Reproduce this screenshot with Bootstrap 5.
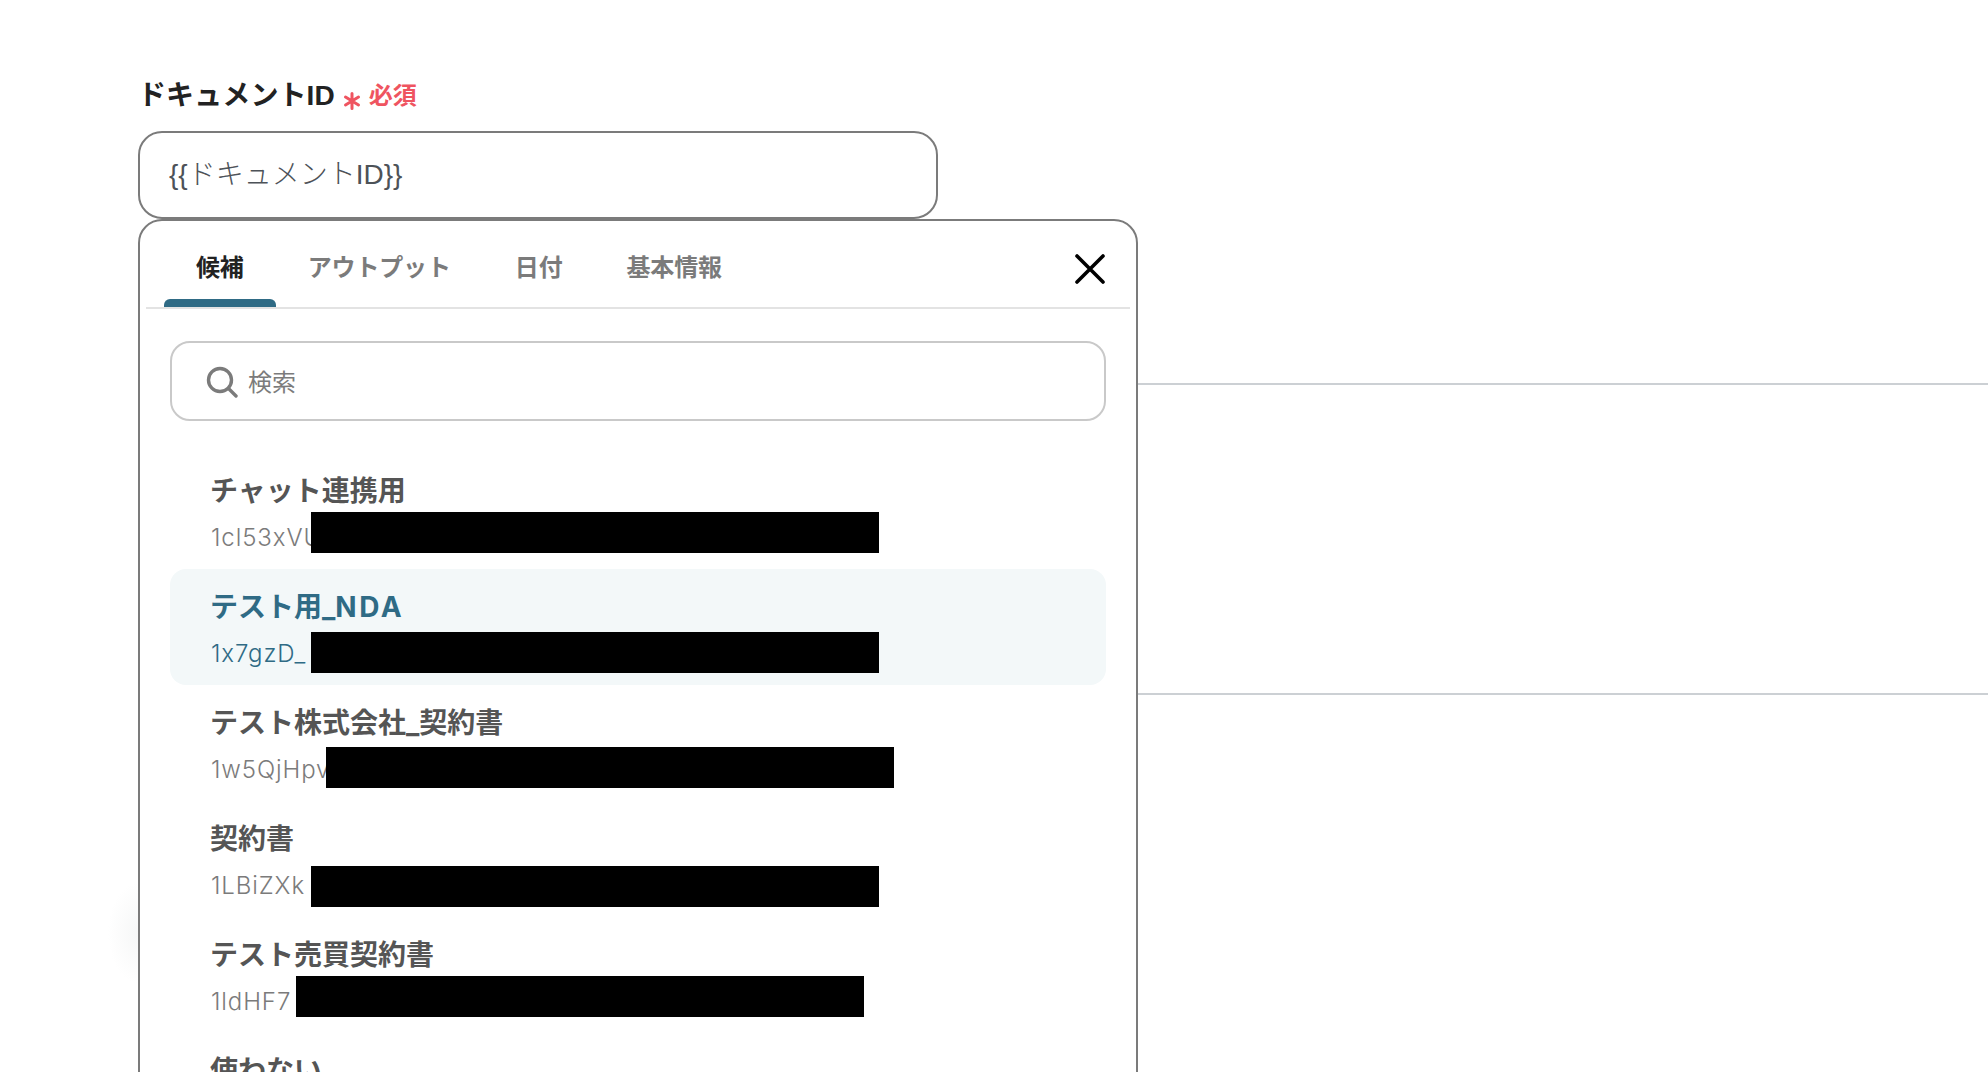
<!DOCTYPE html>
<html lang="ja">
<head>
    <meta charset="UTF-8">
    <title>ドキュメントID</title>
    <link rel="stylesheet" href="https://cdn.jsdelivr.net/npm/bootstrap@5.3.2/dist/css/bootstrap.min.css">
    <script src="https://cdn.jsdelivr.net/npm/bootstrap@5.3.2/dist/js/bootstrap.bundle.min.js"></script>
    <style>
        html, body { height: 100%; overflow: hidden; }
        body { font-family: "Liberation Sans", "Noto Sans CJK JP", sans-serif; background: #fff; color: #222; }
        .page-area { padding: 76px 0 0 138px; }
        .field-label { font-size: 28px; font-weight: 700; height: 38px; margin-bottom: 17px; gap: 8px; }
        .field-label .label-main { margin-top: 2px; letter-spacing: 0.1px; }
        .req-star { margin-top: 12px; }
        .req-text { color: #ef5460; font-size: 24px; margin-top: 2px; }
        .id-input { width: 800px; height: 88px; border: 2px solid #7b7b7b; border-radius: 24px; padding: 0 29px; font-size: 28px; font-weight: 300; color: #4d5258; }
        .field-body { position: relative; padding-top: 164px; }
        .bg-rule { height: 2px; background: #ccd0d4; opacity: 1; border: 0; margin: 0; }
        .bg-rule.second { margin-top: 308px; }
        .side-glow { position: absolute; left: -30px; top: 664px; width: 60px; height: 100px; background: radial-gradient(closest-side, #f6f7f7, #fff); }
        .var-panel { position: absolute; left: 0; top: 0; width: 1000px; height: 1000px; background: #fff; border: 2px solid #7b7b7b; border-radius: 24px; padding: 0 6px; }
        .tab-row { height: 88px; border-bottom: 2px solid #e3e3e3; padding-left: 18px; }
        .tab-btn { height: 86px; padding: 7px 32px 0; text-align: center; font-size: 24px; font-weight: 700; letter-spacing: -0.15px; color: #7b7b7b; background: none; border: 0; position: relative; }
        .tab-btn.on { color: #222; }
        .tab-btn.on::after { content: ""; position: absolute; left: 0; right: 0; bottom: 0; height: 8px; background: #2f6b85; border-radius: 6px 6px 0 0; }
        .close-x { position: absolute; left: 935px; top: 33px; width: 30px; height: 30px; padding: 0; background: none; border: 0; }
        .list-wrap { padding: 32px 24px 0; }
        .search-box { height: 80px; border: 2px solid #c9c9c9; border-radius: 20px; padding: 2px 0 0 34px; gap: 10px; color: #7b7b7b; font-size: 24px; }
        .search-box span { margin-top: 2px; }
        .doc-list { margin-top: 32px; }
        .doc-item { height: 116px; border-radius: 16px; padding: 18px 40px 0; position: relative; color: #555; }
        .doc-item.sel { background: #f3f8f9; color: #2f6b85; }
        .doc-title { font-family: Inter, "Noto Sans CJK JP", sans-serif; font-size: 28px; font-weight: 700; line-height: 40px; }
        .latin-wide { letter-spacing: 2.5px; }
        .doc-id { font-family: Inter, "Liberation Sans", sans-serif; font-feature-settings: "calt" 0; font-size: 24px; font-weight: 300; letter-spacing: 0.9px; line-height: 36px; margin-top: 9px; padding-left: 1px; color: #7b7b7b; }
        .sel .doc-id { color: #2f6b85; }
        .redact { position: absolute; height: 41px; width: 568px; background: #000; }
    </style>
</head>

<body>
    <div class="page-area">
        <div class="field-label d-flex align-items-center">
            <span class="label-main">ドキュメントID</span>
            <svg class="req-star" width="18" height="18" viewBox="0 0 18 18" aria-hidden="true"><path d="M9 1.5 V16.5 M2.5 5 L15.5 13 M15.5 5 L2.5 13" stroke="#ef5460" stroke-width="3" stroke-linecap="round" fill="none"/></svg>
            <span class="req-text">必須</span>
        </div>
        <div class="id-input d-flex align-items-center">{{ドキュメントID}}</div>
        <div class="field-body">
            <hr class="bg-rule">
            <hr class="bg-rule second">
            <div class="side-glow"></div>

            <!-- Popup over the form -->
            <div class="var-panel">
                <div class="tab-row d-flex">
                    <button class="tab-btn on" type="button">候補</button>
                    <button class="tab-btn" type="button">アウトプット</button>
                    <button class="tab-btn" type="button">日付</button>
                    <button class="tab-btn" type="button">基本情報</button>
                </div>
                <button class="close-x" type="button" aria-label="閉じる">
                    <svg width="30" height="30" viewBox="0 0 30 30"><path d="M2 2 L28 28 M28 2 L2 28" stroke="#000" stroke-width="3.6" stroke-linecap="round" fill="none"/></svg>
                </button>
                <div class="list-wrap">
                    <div class="search-box d-flex align-items-center">
                        <svg width="32" height="32" viewBox="0 0 32 32"><circle cx="14" cy="14" r="11.5" stroke="#7b7b7b" stroke-width="3.4" fill="none"/><path d="M22.5 22.5 L30 30" stroke="#7b7b7b" stroke-width="3.4" stroke-linecap="round"/></svg>
                        <span>検索</span>
                    </div>
                    <div class="doc-list">
                        <div class="doc-item">
                            <div class="doc-title">チャット連携用</div>
                            <div class="doc-id">1cl53xVU</div>
                            <div class="redact" style="left: 141px; top: 59px"></div>
                        </div>
                        <div class="doc-item sel">
                            <div class="doc-title">テスト用_<span class="latin-wide">NDA</span></div>
                            <div class="doc-id">1x7gzD_</div>
                            <div class="redact" style="left: 141px; top: 63px"></div>
                        </div>
                        <div class="doc-item">
                            <div class="doc-title">テスト株式会社_契約書</div>
                            <div class="doc-id">1w5QjHpv</div>
                            <div class="redact" style="left: 156px; top: 62px"></div>
                        </div>
                        <div class="doc-item">
                            <div class="doc-title">契約書</div>
                            <div class="doc-id">1LBiZXk</div>
                            <div class="redact" style="left: 141px; top: 65px"></div>
                        </div>
                        <div class="doc-item">
                            <div class="doc-title">テスト売買契約書</div>
                            <div class="doc-id">1ldHF7</div>
                            <div class="redact" style="left: 126px; top: 59px"></div>
                        </div>
                        <div class="doc-item">
                            <div class="doc-title">使わない</div>
                        </div>
                    </div>
                </div>
            </div>
        </div>
    </div>
</body>

</html>
